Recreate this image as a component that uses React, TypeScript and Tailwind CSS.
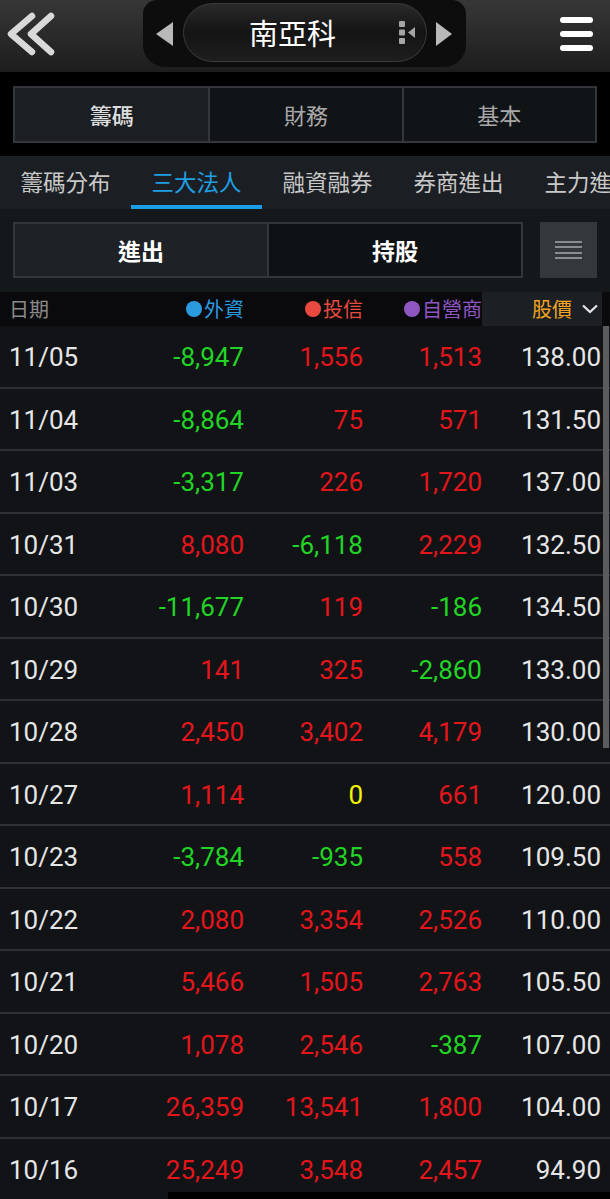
import React from 'react';

type Row = { date: string; foreign: string; trust: string; dealer: string; price: string };

const ROWS: Row[] = [
  { date: '11/05', foreign: '-8,947', trust: '1,556', dealer: '1,513', price: '138.00' },
  { date: '11/04', foreign: '-8,864', trust: '75', dealer: '571', price: '131.50' },
  { date: '11/03', foreign: '-3,317', trust: '226', dealer: '1,720', price: '137.00' },
  { date: '10/31', foreign: '8,080', trust: '-6,118', dealer: '2,229', price: '132.50' },
  { date: '10/30', foreign: '-11,677', trust: '119', dealer: '-186', price: '134.50' },
  { date: '10/29', foreign: '141', trust: '325', dealer: '-2,860', price: '133.00' },
  { date: '10/28', foreign: '2,450', trust: '3,402', dealer: '4,179', price: '130.00' },
  { date: '10/27', foreign: '1,114', trust: '0', dealer: '661', price: '120.00' },
  { date: '10/23', foreign: '-3,784', trust: '-935', dealer: '558', price: '109.50' },
  { date: '10/22', foreign: '2,080', trust: '3,354', dealer: '2,526', price: '110.00' },
  { date: '10/21', foreign: '5,466', trust: '1,505', dealer: '2,763', price: '105.50' },
  { date: '10/20', foreign: '1,078', trust: '2,546', dealer: '-387', price: '107.00' },
  { date: '10/17', foreign: '26,359', trust: '13,541', dealer: '1,800', price: '104.00' },
  { date: '10/16', foreign: '25,249', trust: '3,548', dealer: '2,457', price: '94.90' },
];

const SUB_TABS = ['籌碼分布', '三大法人', '融資融券', '券商進出', '主力進出'];

const CJK = { fontFamily: '"Noto Sans CJK TC", "Noto Sans", sans-serif' };
const NUM = { fontFamily: 'Roboto, "Noto Sans CJK TC", sans-serif' };

// 負數綠、零黃、正數紅
function tone(v: string) {
  if (v.startsWith('-')) return 'text-[#22d425]';
  if (v === '0') return 'text-[#f2f200]';
  return 'text-[#e3161c]';
}

function Header() {
  return (
    <div className="h-[72px] flex bg-linear-to-b from-[#373737] to-[#1d1d1d]">
      <div className="w-[143px] flex items-start">
        <svg width="64" height="68" viewBox="0 0 64 68">
          <path d="M32 16 L11 34 L32 52 M51 16 L31 34 L51 52" fill="none" stroke="#d9d9d9" strokeWidth="6.5" strokeLinecap="round" strokeLinejoin="round" />
        </svg>
      </div>

      <div className="w-[323px] h-[67px] rounded-b-[22px] rounded-t-[14px] bg-[#0d0d0d] flex items-center pl-[13px]">
        <svg width="17" height="24" viewBox="0 0 17 24">
          <polygon points="17,0 0,12 17,24" fill="#b9b9b9" />
        </svg>
        <div className="ml-[10px] w-[244px] h-[59px] mb-[3px] rounded-full border border-[#3a3a3a] bg-linear-to-b from-[#2a2a2a] via-[#141414] to-[#1e1e1e] flex items-center">
          <div className="flex-1 text-center text-white text-[29px] leading-none pl-[2px]">南亞科</div>
          <svg width="17" height="23" viewBox="0 0 17 23" className="mr-[10px]">
            <rect x="0" y="0" width="6" height="6" rx="1" fill="#a5a5a5" />
            <rect x="0" y="8.5" width="6" height="6" rx="1" fill="#a5a5a5" />
            <rect x="0" y="17" width="6" height="6" rx="1" fill="#a5a5a5" />
            <polygon points="16,6 9,11.5 16,17" fill="#a5a5a5" />
          </svg>
        </div>
        <svg width="16" height="24" viewBox="0 0 16 24" className="ml-[9px]">
          <polygon points="0,0 16,12 0,24" fill="#b9b9b9" />
        </svg>
      </div>

      <div className="flex-1 flex justify-end pr-[17px] pt-[17px]">
        <div className="flex flex-col gap-[8px]">
          <div className="w-[33px] h-[6px] rounded-full bg-white" />
          <div className="w-[33px] h-[6px] rounded-full bg-white" />
          <div className="w-[33px] h-[6px] rounded-full bg-white" />
        </div>
      </div>
    </div>
  );
}

export default function App() {
  return (
    <div className="relative w-[610px] h-[1199px] overflow-hidden bg-black" style={CJK}>
      <Header />

      {/* 主分頁 */}
      <div className="mx-[13px] mt-[14px] h-[57px] grid grid-cols-3 border-2 border-[#33363a]">
        <div className="flex items-center justify-center bg-[#1b1f23] text-[#dedede] text-[22px] font-medium">籌碼</div>
        <div className="flex items-center justify-center bg-[#111417] text-[#a9a9a9] text-[22px] border-l-2 border-[#33363a]">財務</div>
        <div className="flex items-center justify-center bg-[#111417] text-[#a9a9a9] text-[22px] border-l-2 border-[#33363a]">基本</div>
      </div>

      {/* 子分頁，最後一項在畫面右緣被截斷 */}
      <div className="mt-[13px] h-[53px] bg-[#1b1e22] flex overflow-hidden">
        {SUB_TABS.map((t, i) => (
          <div key={t} className="relative w-[131px] shrink-0 flex items-center justify-center pb-[3px]">
            <span className={`text-[22.5px] leading-none whitespace-nowrap ${i === 1 ? 'text-[#1f9fe3]' : 'text-[#c8c8c8]'}`}>{t}</span>
            {i === 1 && <div className="absolute left-0 right-0 bottom-0 h-[4px] bg-[#1a9fe6]" />}
          </div>
        ))}
      </div>

      {/* 進出 / 持股 */}
      <div className="h-[83px] bg-[#15181b] px-[13px] pt-[13px] flex">
        <div className="w-[510px] h-[56px] flex border-2 border-[#33363a]">
          <div className="flex-1 flex items-center justify-center bg-[#1e2226] text-white text-[23px] font-bold">進出</div>
          <div className="flex-1 flex items-center justify-center bg-[#0f1215] text-white text-[23px] font-bold border-l-2 border-[#33363a]">持股</div>
        </div>
        <div className="ml-[17px] w-[57px] h-[56px] bg-[#34383c] flex flex-col items-center justify-center gap-[3.5px]">
          <div className="w-[27px] h-[2px] bg-[#8a8d90]" />
          <div className="w-[27px] h-[2px] bg-[#8a8d90]" />
          <div className="w-[27px] h-[2px] bg-[#8a8d90]" />
          <div className="w-[27px] h-[2px] bg-[#8a8d90]" />
        </div>
      </div>

      {/* 表頭 */}
      <div className="h-[34px] bg-[#0a0a0c] flex items-center text-[20px] leading-none">
        <div className="w-[130px] pl-[9px] text-[#8a8a8a]">日期</div>
        <div className="w-[114px] flex items-center justify-end text-[#2b9be0]">
          <span className="w-[16px] h-[16px] rounded-full bg-[#2b9be0] mr-[2px]" />外資
        </div>
        <div className="w-[119px] flex items-center justify-end text-[#e84a3f]">
          <span className="w-[16px] h-[16px] rounded-full bg-[#e84a3f] mr-[2px]" />投信
        </div>
        <div className="w-[119px] flex items-center justify-end text-[#8f56c2]">
          <span className="w-[16px] h-[16px] rounded-full bg-[#8f56c2] mr-[2px]" />自營商
        </div>
        <div className="w-[120px] h-full bg-[#1c2024] flex items-center justify-end pr-[4px]">
          <span className="text-[#f3a521]">股價</span>
          <svg width="16" height="10" viewBox="0 0 16 10" className="ml-[10px]">
            <polyline points="1,1.5 8,8 15,1.5" fill="none" stroke="#e8e8e8" strokeWidth="2.2" />
          </svg>
        </div>
      </div>

      {/* 資料列 */}
      <div className="relative bg-[#111316]">
        {ROWS.map(r => (
          <div key={r.date} className="h-[62.5px] flex items-center pt-[2px] border-b-2 border-[#2d3034] text-[26px] leading-none" style={NUM}>
            <div className="w-[130px] pl-[9px] text-[#e6e6e6]">{r.date}</div>
            <div className={`w-[114px] text-right ${tone(r.foreign)}`}>{r.foreign}</div>
            <div className={`w-[119px] text-right ${tone(r.trust)}`}>{r.trust}</div>
            <div className={`w-[119px] text-right ${tone(r.dealer)}`}>{r.dealer}</div>
            <div className="w-[119px] text-right text-[#e6e6e6]">{r.price}</div>
          </div>
        ))}
        <div className="absolute top-0 right-[1px] w-[6px] h-[422px] bg-[#5a5c5e]" />
      </div>

      <div className="absolute bottom-0 left-[168px] right-0 h-[7px] bg-black" />
    </div>
  );
}
